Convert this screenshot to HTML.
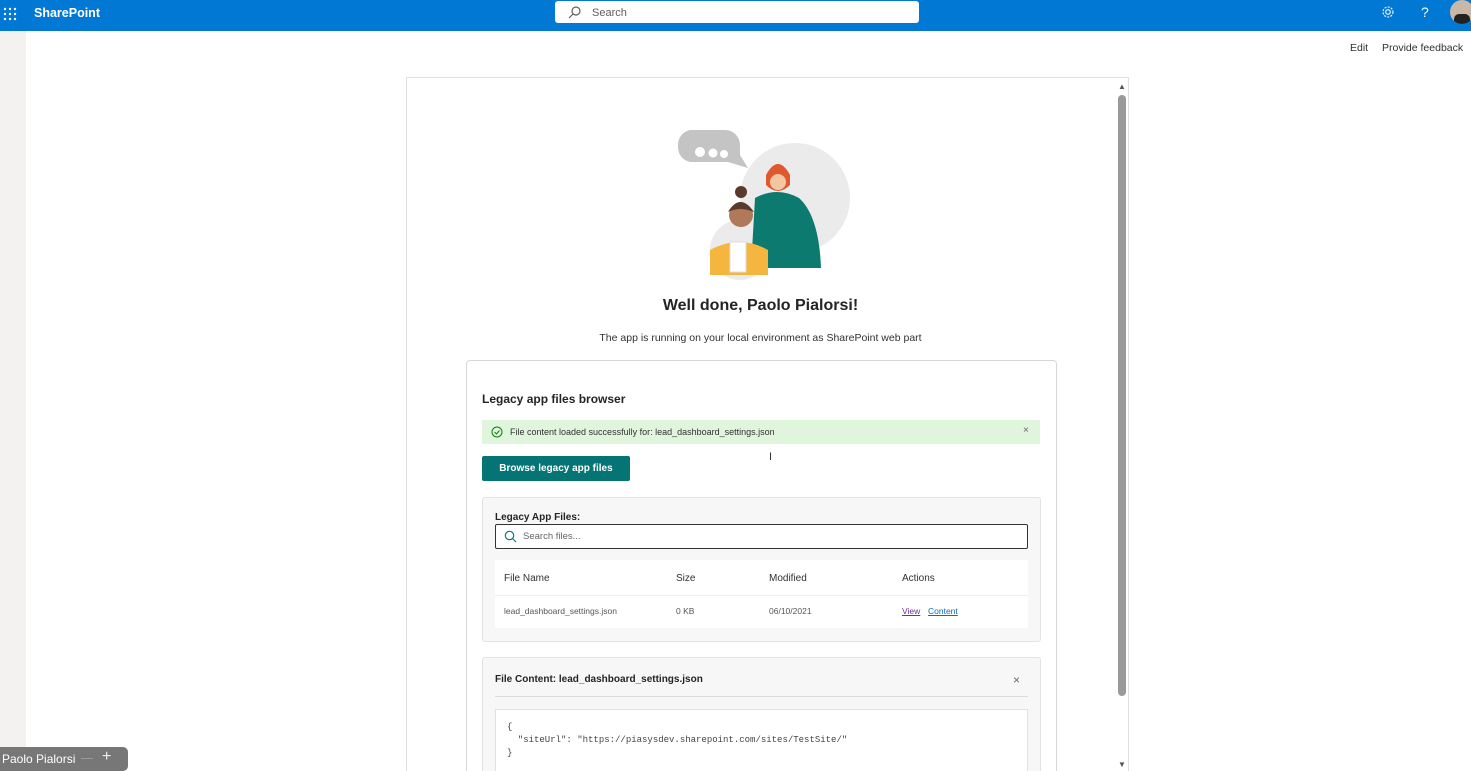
<!DOCTYPE html>
<html style="width:1471px;height:771px;overflow:hidden"><head><meta charset="utf-8"><style>
*{box-sizing:border-box;margin:0;padding:0}
body{width:1471px;height:771px;overflow:hidden;background:#fff;font-family:"Liberation Sans",sans-serif;color:#323130;position:relative}
.abs{position:absolute}
</style></head><body>
<div class="abs" style="left:0;top:0;width:1471px;height:31px;background:#0078d4"></div>
<svg class="abs" style="left:3px;top:7px" width="14" height="14"><g fill="#fff">
<circle cx="2" cy="2" r="1.2"/><circle cx="7" cy="2" r="1.2"/><circle cx="12" cy="2" r="1.2"/>
<circle cx="2" cy="7" r="1.2"/><circle cx="7" cy="7" r="1.2"/><circle cx="12" cy="7" r="1.2"/>
<circle cx="2" cy="12" r="1.2"/><circle cx="7" cy="12" r="1.2"/><circle cx="12" cy="12" r="1.2"/></g></svg>
<div class="abs" style="left:34px;top:6px;color:#fff;font-weight:bold;font-size:12.5px">SharePoint</div>
<div class="abs" style="left:555px;top:1px;width:364px;height:22px;background:#fff;border-radius:3px"></div>
<svg class="abs" style="left:568px;top:6px" width="13" height="13"><circle cx="8" cy="5" r="4" fill="none" stroke="#605e5c" stroke-width="1.2"/><line x1="5" y1="8" x2="1" y2="12" stroke="#605e5c" stroke-width="1.2"/></svg>
<div class="abs" style="left:592px;top:7px;font-size:11px;color:#605e5c">Search</div>
<svg class="abs" style="left:1381px;top:5px" width="14" height="14"><circle cx="7" cy="7" r="2.3" fill="none" stroke="#fff" stroke-width="1.1"/><circle cx="7" cy="7" r="5" fill="none" stroke="#fff" stroke-width="1.1" stroke-dasharray="2 1.3"/></svg>
<div class="abs" style="left:1421px;top:4px;color:#fff;font-size:14px">?</div>
<div class="abs" style="left:1450px;top:0;width:24px;height:24px;border-radius:50%;background:#c9b8a8;overflow:hidden"><div style="position:absolute;left:4px;top:14px;width:16px;height:12px;background:#222;border-radius:5px"></div></div>
<div class="abs" style="left:0;top:31px;width:26px;height:740px;background:#f3f2f1"></div>
<div class="abs" style="left:1350px;top:42px;font-size:10.5px">Edit</div>
<div class="abs" style="left:1382px;top:42px;font-size:10.5px">Provide feedback</div>
<div class="abs" style="left:406px;top:77px;width:723px;height:694px;border:1px solid #e1dfdd;border-bottom:none"></div>
<div class="abs" style="left:1118px;top:95px;width:8px;height:601px;background:#9a9a9a;border-radius:4px"></div>
<div class="abs" style="left:1118px;top:82px;font-size:8px;color:#555">▲</div>
<div class="abs" style="left:1118px;top:760px;font-size:8px;color:#555">▼</div>
<svg class="abs" style="left:670px;top:120px" width="190" height="160">
<circle cx="125" cy="78" r="55" fill="#ebebeb"/>
<circle cx="70" cy="130" r="30" fill="#ebebeb"/>
<path d="M20 10 h35 a15 15 0 0 1 15 15 v10 l8 13 l-20 -6 h-38 a15 15 0 0 1 -12 -14 v-3 a15 15 0 0 1 12 -15z" fill="#c4c4c4"/>
<circle cx="30" cy="32" r="5" fill="#fff"/><circle cx="43" cy="33" r="4.5" fill="#fff"/><circle cx="54" cy="34" r="4" fill="#fff"/>
<path d="M85 78 q22 -12 44 0 q20 18 22 70 h-70 z" fill="#0d7a70"/>
<circle cx="108" cy="58" r="12" fill="#f2c6a0"/>
<path d="M96 55 q12 -22 24 0 v10 q-12 12 -24 0z" fill="#e0592e"/>
<circle cx="108" cy="62" r="8" fill="#f2c6a0"/>
<path d="M40 130 q30 -16 58 0 v25 h-58z" fill="#f4b63f"/>
<rect x="60" y="122" width="16" height="30" fill="#fff" stroke="#ddd"/>
<circle cx="71" cy="95" r="12" fill="#b07a5a"/>
<path d="M58 92 q12 -20 26 0 q-14 -6 -26 0z" fill="#5a3a2a"/>
<circle cx="71" cy="72" r="6" fill="#5a3a2a"/>
</svg>
<div class="abs" style="left:406px;top:297px;width:709px;text-align:center;font-size:16px;font-weight:bold;color:#242424">Well done, Paolo Pialorsi!</div>
<div class="abs" style="left:406px;top:332px;width:709px;text-align:center;font-size:10.5px">The app is running on your local environment as SharePoint web part</div>
<div class="abs" style="left:466px;top:360px;width:591px;height:420px;border:1px solid #d6d6d6;border-radius:4px"></div>
<div class="abs" style="left:482px;top:392px;font-size:12px;font-weight:bold;color:#242424">Legacy app files browser</div>
<div class="abs" style="left:482px;top:420px;width:558px;height:24px;background:#dff6dd"></div>
<svg class="abs" style="left:491px;top:426px" width="12" height="12"><circle cx="6" cy="6" r="5" fill="none" stroke="#107c10" stroke-width="1"/><path d="M3.5 6 l2 2 l3 -3.5" fill="none" stroke="#107c10"/></svg>
<div class="abs" style="left:510px;top:427px;font-size:9px;color:#323130">File content loaded successfully for: lead_dashboard_settings.json</div>
<div class="abs" style="left:1023px;top:425px;font-size:10px;color:#666">×</div>
<div class="abs" style="left:482px;top:456px;width:148px;height:25px;background:#047574;border-radius:2px;color:#fff;font-size:10px;font-weight:bold;text-align:center;line-height:25px">Browse legacy app files</div>
<div class="abs" style="left:482px;top:497px;width:559px;height:145px;background:#f7f7f7;border:1px solid #e3e3e3;border-radius:3px"></div>
<div class="abs" style="left:495px;top:512px;font-size:10px;font-weight:bold;color:#242424">Legacy App Files:</div>
<div class="abs" style="left:495px;top:524px;width:533px;height:25px;background:#fff;border:1px solid #333;border-radius:2px"></div>
<svg class="abs" style="left:504px;top:530px" width="13" height="13"><circle cx="5.5" cy="5.5" r="4.2" fill="none" stroke="#0f7b73" stroke-width="1.2"/><line x1="8.5" y1="8.5" x2="12" y2="12" stroke="#0f7b73" stroke-width="1.2"/></svg>
<div class="abs" style="left:523px;top:531px;font-size:9.5px;color:#666">Search files...</div>
<div class="abs" style="left:495px;top:560px;width:533px;height:68px;background:#fff"></div>
<div class="abs" style="left:495px;top:595px;width:533px;height:1px;background:#eee"></div>
<div class="abs" style="left:504px;top:573px;font-size:10px;color:#323130">File Name</div>
<div class="abs" style="left:676px;top:573px;font-size:10px">Size</div>
<div class="abs" style="left:769px;top:573px;font-size:10px">Modified</div>
<div class="abs" style="left:902px;top:573px;font-size:10px">Actions</div>
<div class="abs" style="left:504px;top:606px;font-size:8.5px;color:#555">lead_dashboard_settings.json</div>
<div class="abs" style="left:676px;top:606px;font-size:8.5px;color:#555">0 KB</div>
<div class="abs" style="left:769px;top:606px;font-size:8.5px;color:#555">06/10/2021</div>
<div class="abs" style="left:902px;top:606px;font-size:8.5px;color:#6b2fa0;text-decoration:underline">View</div>
<div class="abs" style="left:928px;top:606px;font-size:8.5px;color:#0f6cbd;text-decoration:underline">Content</div>
<div class="abs" style="left:482px;top:657px;width:559px;height:120px;background:#f7f7f7;border:1px solid #e3e3e3;border-radius:3px"></div>
<div class="abs" style="left:495px;top:674px;font-size:10px;font-weight:bold;color:#242424">File Content: lead_dashboard_settings.json</div>
<div class="abs" style="left:1013px;top:673px;font-size:12px;color:#666">×</div>
<div class="abs" style="left:495px;top:696px;width:533px;height:1px;background:#ddd"></div>
<div class="abs" style="left:495px;top:709px;width:533px;height:70px;background:#fff;border:1px solid #e1e1e1"></div>
<pre class="abs" style="left:507px;top:721px;font-family:'Liberation Mono',monospace;font-size:9px;line-height:13px;color:#444">{
  "siteUrl": "https://piasysdev.sharepoint.com/sites/TestSite/"
}</pre>
<div class="abs" style="left:0;top:747px;width:128px;height:24px;background:#777;border-radius:0 5px 5px 0"></div>
<div class="abs" style="left:2px;top:752px;font-size:12px;color:#fff">Paolo Pialorsi</div>
<div class="abs" style="left:81px;top:758px;width:12px;height:1px;background:#999"></div>
<div class="abs" style="left:102px;top:748px;font-size:16px;color:#eee">+</div>
<div class="abs" style="left:769px;top:451px;font-size:11px;color:#333">I</div>
</body></html>
